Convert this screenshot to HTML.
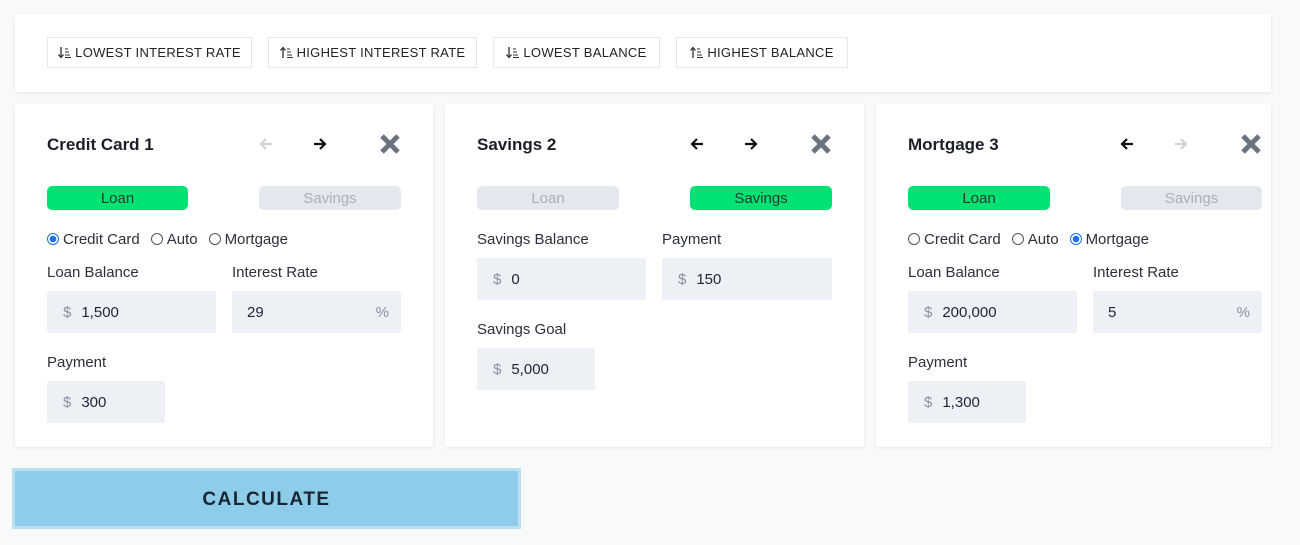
<!DOCTYPE html><html><head><style>
body{margin:0;width:1300px;height:545px;background:#f7f9fb;font-family:"Liberation Sans",sans-serif;position:relative;overflow:hidden;color:#1f2430}
.a{position:absolute}
.panel{background:#fff;box-shadow:0 1px 3px rgba(0,0,0,.08)}
.sb{position:absolute;top:37px;border:1px solid #e5e7eb;background:#fff;font-size:13px;line-height:29px;color:#222;box-sizing:border-box;height:31px;text-align:center;letter-spacing:.3px}
.sb svg{vertical-align:-2px;margin-right:3px}
.t{font-weight:bold;font-size:17px;color:#1b1f27}
.tg{position:absolute;height:24px;width:141px;border-radius:5px;font-size:15px;line-height:26px;text-align:center}
.on{background:#00e272;color:#2b3a33}.off{background:#e3e8ef;color:#a8afbb}
.lb{position:absolute;font-size:15px;color:#2b303a}
.in{position:absolute;height:42px;background:#edf1f6;border-radius:2px;font-size:15px;line-height:44px;color:#1f2430}
.in .d{color:#8a919c;margin-left:16px;margin-right:10px}
.r{display:inline-block;width:12px;height:12px;border:1px solid #555;border-radius:50%;vertical-align:-1px;margin-right:4px;box-sizing:border-box}
.r.c{border:1px solid #1a73e8;background:radial-gradient(#1a73e8 0 3px,#fff 3.5px)}
.sp{display:inline-block;width:11px}
</style></head><body>
<svg width="0" height="0" style="position:absolute"><defs>
<g id="dn"><path d="M3 1V11M0.5 8.5L3 11.5L5.5 8.5" stroke="#333" stroke-width="1.3" fill="none"/><path d="M7 3H10M7 6H11M7 9H12M7 11.5H13" stroke="#333" stroke-width="1.1"/></g>
<g id="up"><path d="M3 12V2M0.5 4.5L3 1.5L5.5 4.5" stroke="#333" stroke-width="1.3" fill="none"/><path d="M7 3H10M7 6H11M7 9H12M7 11.5H13" stroke="#333" stroke-width="1.1"/></g>
<g id="la"><path d="M14 8H3M8 3L3 8L8 13" stroke-width="2.2" fill="none"/></g>
<g id="ra"><path d="M2 8H13M8 3L13 8L8 13" stroke-width="2.2" fill="none"/></g>
<g id="x"><path d="M3 3L19 19M19 3L3 19" stroke="#6b7280" stroke-width="5"/></g>
</defs></svg>
<div class="a panel" style="left:15px;top:14px;width:1256px;height:78px"></div>
<div class="sb" style="left:47px;width:205px"><svg width="14" height="13"><use href="#dn"/></svg>LOWEST INTEREST RATE</div>
<div class="sb" style="left:268px;width:209px"><svg width="14" height="13"><use href="#up"/></svg>HIGHEST INTEREST RATE</div>
<div class="sb" style="left:493px;width:167px"><svg width="14" height="13"><use href="#dn"/></svg>LOWEST BALANCE</div>
<div class="sb" style="left:676px;width:172px"><svg width="14" height="13"><use href="#up"/></svg>HIGHEST BALANCE</div>

<div class="a panel" style="left:15px;top:104px;width:418px;height:343px"></div>
<div class="a panel" style="left:445px;top:104px;width:419px;height:343px"></div>
<div class="a panel" style="left:876px;top:104px;width:395px;height:343px"></div>

<!-- card 1 -->
<div class="a t" style="left:47px;top:135px">Credit Card 1</div>
<svg class="a" style="left:258px;top:136px" width="16" height="16" stroke="#d0d4da"><use href="#la"/></svg>
<svg class="a" style="left:312px;top:136px" width="16" height="16" stroke="#111"><use href="#ra"/></svg>
<svg class="a" style="left:379px;top:133px" width="22" height="22"><use href="#x"/></svg>
<div class="tg on" style="left:47px;top:186px">Loan</div>
<div class="tg off" style="left:259px;top:186px;width:142px">Savings</div>
<div class="lb" style="left:47px;top:231px"><span class="r c"></span>Credit Card<span class="sp"></span><span class="r"></span>Auto<span class="sp"></span><span class="r"></span>Mortgage</div>
<div class="lb" style="left:47px;top:264px">Loan Balance</div>
<div class="lb" style="left:232px;top:264px">Interest Rate</div>
<div class="in" style="left:47px;top:291px;width:169px"><span class="d">$</span>1,500</div>
<div class="in" style="left:232px;top:291px;width:169px"><span style="margin-left:15px">29</span><span class="a" style="right:12px;color:#8a919c">%</span></div>
<div class="lb" style="left:47px;top:354px">Payment</div>
<div class="in" style="left:47px;top:381px;width:118px"><span class="d">$</span>300</div>

<!-- card 2 -->
<div class="a t" style="left:477px;top:135px">Savings 2</div>
<svg class="a" style="left:689px;top:136px" width="16" height="16" stroke="#111"><use href="#la"/></svg>
<svg class="a" style="left:743px;top:136px" width="16" height="16" stroke="#111"><use href="#ra"/></svg>
<svg class="a" style="left:810px;top:133px" width="22" height="22"><use href="#x"/></svg>
<div class="tg off" style="left:477px;top:186px;width:142px">Loan</div>
<div class="tg on" style="left:690px;top:186px;width:142px">Savings</div>
<div class="lb" style="left:477px;top:231px">Savings Balance</div>
<div class="lb" style="left:662px;top:231px">Payment</div>
<div class="in" style="left:477px;top:258px;width:169px"><span class="d">$</span>0</div>
<div class="in" style="left:662px;top:258px;width:170px"><span class="d">$</span>150</div>
<div class="lb" style="left:477px;top:321px">Savings Goal</div>
<div class="in" style="left:477px;top:348px;width:118px"><span class="d">$</span>5,000</div>

<!-- card 3 -->
<div class="a t" style="left:908px;top:135px">Mortgage 3</div>
<svg class="a" style="left:1119px;top:136px" width="16" height="16" stroke="#111"><use href="#la"/></svg>
<svg class="a" style="left:1173px;top:136px" width="16" height="16" stroke="#d0d4da"><use href="#ra"/></svg>
<svg class="a" style="left:1240px;top:133px" width="22" height="22"><use href="#x"/></svg>
<div class="tg on" style="left:908px;top:186px;width:142px">Loan</div>
<div class="tg off" style="left:1121px;top:186px;width:141px">Savings</div>
<div class="lb" style="left:908px;top:231px"><span class="r"></span>Credit Card<span class="sp"></span><span class="r"></span>Auto<span class="sp"></span><span class="r c"></span>Mortgage</div>
<div class="lb" style="left:908px;top:264px">Loan Balance</div>
<div class="lb" style="left:1093px;top:264px">Interest Rate</div>
<div class="in" style="left:908px;top:291px;width:169px"><span class="d">$</span>200,000</div>
<div class="in" style="left:1093px;top:291px;width:169px"><span style="margin-left:15px">5</span><span class="a" style="right:12px;color:#8a919c">%</span></div>
<div class="lb" style="left:908px;top:354px">Payment</div>
<div class="in" style="left:908px;top:381px;width:118px"><span class="d">$</span>1,300</div>

<div class="a" style="left:12px;top:468px;width:503px;height:55px;background:#8ecde9;border:3px solid #b8e0f2;font-weight:bold;font-size:19px;letter-spacing:1.5px;line-height:58px;text-align:center;color:#1b2530">CALCULATE</div>
</body></html>
